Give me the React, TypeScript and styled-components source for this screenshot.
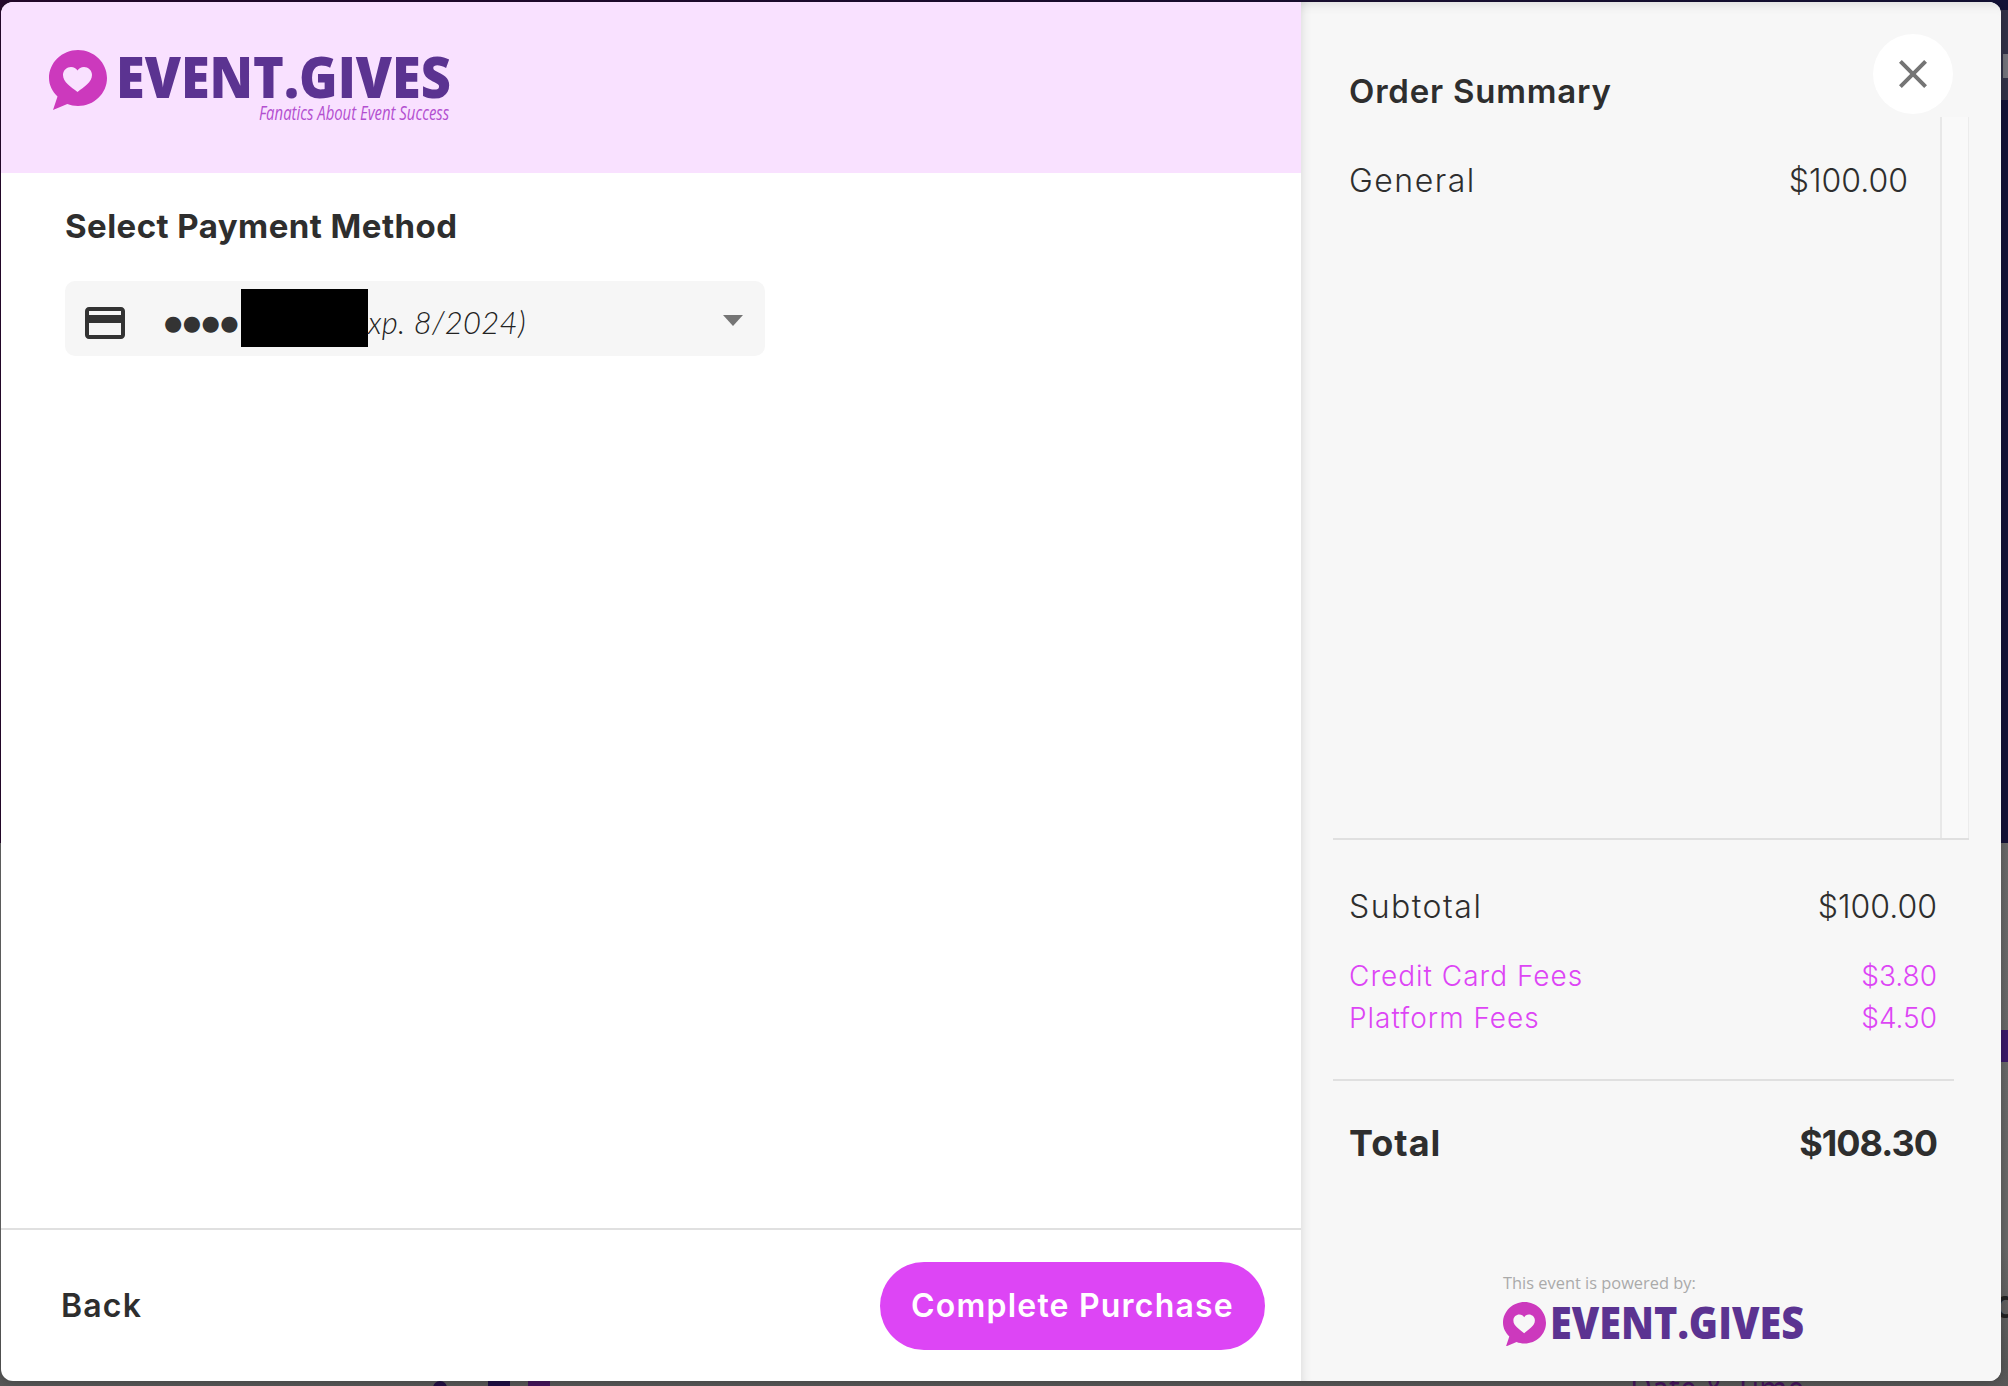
import styled, { createGlobalStyle } from 'styled-components';
import { MdClose, MdCreditCard } from 'react-icons/md';

const App = () => {
  return (
    <Page>
      <GlobalStyle />
      <Backdrop>
        <HeroBand />
        <BehindDot />
        <BehindBar $left={488} $color="#1f0f45" />
        <BehindBar $left={528} $color="#45155c" />
        <BehindHeading>Date &amp; Time</BehindHeading>
        <BehindTab />
        <BehindPurple />
        <BehindLetter>d</BehindLetter>
      </Backdrop>

      <Modal>
        <CheckoutPane>
          <BrandHeader>
            <BrandLogo>
              <LogoMark $width={58} $hole="#f9e1ff" />
              <BrandText>
                <Wordmark $size={57} $scale={0.916} $boxWidth={331}>EVENT.GIVES</Wordmark>
                <Tagline>Fanatics About Event Success</Tagline>
              </BrandText>
            </BrandLogo>
          </BrandHeader>

          <PaymentBody>
            <SectionTitle>Select Payment Method</SectionTitle>
            <PaymentSelect>
              <CardIcon size={48} color="#333333" />
              <CardDots>●●●●</CardDots>
              <Redaction />
              <CardExpiry>xp. 8/2024)</CardExpiry>
              <SelectCaret />
            </PaymentSelect>
          </PaymentBody>

          <ActionBar>
            <BackButton>Back</BackButton>
            <PurchaseButton>Complete Purchase</PurchaseButton>
          </ActionBar>
        </CheckoutPane>

        <SummaryPane>
          <CloseButton>
            <MdClose size={48} color="#757575" />
          </CloseButton>
          <SummaryTitle>Order Summary</SummaryTitle>

          <ItemsArea>
            <ItemsList>
              <ItemRow>
                <RowLabel>General</RowLabel>
                <span>$100.00</span>
              </ItemRow>
            </ItemsList>
            <ScrollTrack />
          </ItemsArea>

          <Totals>
            <SubtotalRow>
              <RowLabel>Subtotal</RowLabel>
              <span>$100.00</span>
            </SubtotalRow>
            {fees.map(fee => (
              <FeeRow key={fee.name}>
                <FeeLabel>{fee.name}</FeeLabel>
                <span>{fee.amount}</span>
              </FeeRow>
            ))}
          </Totals>

          <TotalBlock>
            <TotalRow>
              <TotalLabel>Total</TotalLabel>
              <TotalValue>$108.30</TotalValue>
            </TotalRow>
          </TotalBlock>

          <PoweredBy>
            <PoweredLabel>This event is powered by:</PoweredLabel>
            <PoweredLogo>
              <LogoMark $width={43} $hole="#f7f7f7" />
              <Wordmark $size={44.5} $scale={0.89} $boxWidth={251}>EVENT.GIVES</Wordmark>
            </PoweredLogo>
          </PoweredBy>
        </SummaryPane>
      </Modal>
    </Page>
  );
};

const fees = [
  { name: 'Credit Card Fees', amount: '$3.80' },
  { name: 'Platform Fees', amount: '$4.50' }
];

const LogoMark = ({ $width, $hole }: { $width: number; $hole: string }) => (
  <svg width={$width} height={($width * 60) / 58} viewBox="0 0 58 60">
    <path
      d="M29 0C45 0 58 12.600 58 28C58 43.500 45 56 29 56C25 56 21.500 55.300 18.300 54L4 60L8.500 46.500C3.300 41.500 0 35 0 28C0 12.600 13 0 29 0Z"
      fill="#cc39bd"
    />
    <path
      d="M28.500 42C22 37 14 32 14 25C14 20 18 17 22 17C25 17 27 18.500 28.500 20.500C30 18.500 32 17 35 17C39 17 43 20 43 25C43 32 35 37 28.500 42Z"
      fill={$hole}
    />
  </svg>
);

const GlobalStyle = createGlobalStyle`
  html, body {
    margin: 0;
    padding: 0;
    background: #666666;
  }
  body {
    font-family: Inter, "Open Sans", sans-serif;
    color: #2e2e2e;
  }
`;

const Page = styled.div`
  position: relative;
  width: 2008px;
  height: 1386px;
  overflow: hidden;
  background: #666666;
`;

const Backdrop = styled.div`
  position: absolute;
  inset: 0;
  background: linear-gradient(#6c6c6c, #6a6a6a 90%, #585858);
`;

const HeroBand = styled.div`
  height: 843px;
  background: linear-gradient(90deg, #28092f, #141238);
`;

const BehindDot = styled.div`
  position: absolute;
  left: 433px;
  top: 1381px;
  width: 14px;
  height: 14px;
  border-radius: 50%;
  background: #241044;
`;

const BehindBar = styled.div<{ $left: number; $color: string }>`
  position: absolute;
  left: ${({ $left }) => $left}px;
  top: 1378px;
  width: 22px;
  height: 8px;
  background: ${({ $color }) => $color};
`;

const BehindHeading = styled.div`
  position: absolute;
  left: 1630px;
  top: 1366px;
  font-family: 'Open Sans', sans-serif;
  font-size: 38px;
  line-height: 44px;
  color: #45155c;
  transform: scaleX(0.8);
  transform-origin: left;
  white-space: nowrap;
`;

const BehindTab = styled.div`
  position: absolute;
  right: 0;
  top: 10px;
  width: 8px;
  height: 90px;
  background: #33334a;

  &::after {
    content: '';
    display: block;
    margin: 44px 0 0 3px;
    height: 24px;
    background: #77777f;
  }
`;

const BehindPurple = styled.div`
  position: absolute;
  right: 0;
  top: 1030px;
  width: 8px;
  height: 32px;
  background: #3d1a6b;
`;

const BehindLetter = styled.div`
  position: absolute;
  left: 1994px;
  top: 1280px;
  font-size: 40px;
  line-height: 48px;
  font-weight: 500;
  color: #222222;
`;

const Modal = styled.div`
  position: absolute;
  left: 1px;
  top: 2px;
  width: 2000px;
  height: 1379px;
  display: flex;
  overflow: hidden;
  border-radius: 12px;
  background: #ffffff;
  box-shadow: 0 0 12px rgba(0, 0, 0, 0.3);
`;

const CheckoutPane = styled.div`
  width: 1300px;
  flex-shrink: 0;
  display: flex;
  flex-direction: column;
`;

const BrandHeader = styled.div`
  height: 171px;
  flex-shrink: 0;
  background: #f9e1ff;
  padding: 48px 0 0 48px;
  box-sizing: border-box;
`;

const BrandLogo = styled.div`
  display: flex;
  align-items: flex-start;
  gap: 9px;
`;

const BrandText = styled.div`
  display: flex;
  flex-direction: column;
  align-items: flex-end;
  width: 331px;
  padding-top: 1px;
`;

const Wordmark = styled.div<{ $size: number; $scale: number; $boxWidth: number }>`
  width: ${({ $boxWidth }) => $boxWidth}px;
  margin-top: 2px;
  font-family: 'Open Sans', sans-serif;
  font-weight: 800;
  font-size: ${({ $size }) => $size}px;
  line-height: ${({ $size }) => Math.round($size * 0.8)}px;
  color: #5b3391;
  white-space: nowrap;
  transform: scaleX(${({ $scale }) => $scale});
  transform-origin: left center;
`;

const Tagline = styled.div`
  width: 188px;
  margin-top: 2px;
  font-family: 'Open Sans', sans-serif;
  font-style: italic;
  font-weight: 400;
  font-size: 20px;
  line-height: 24px;
  color: #b34fd0;
  white-space: nowrap;
  transform: scaleX(0.745);
  transform-origin: left center;
`;

const PaymentBody = styled.div`
  flex: 1;
  padding: 32px 0 0 64px;
`;

const SectionTitle = styled.h2`
  margin: 0;
  font-size: 33px;
  line-height: 43px;
  font-weight: 700;
  letter-spacing: 0.45px;
  color: #2e2e2e;
`;

const PaymentSelect = styled.div`
  position: relative;
  width: 700px;
  height: 75px;
  margin-top: 33px;
  padding-left: 16px;
  box-sizing: border-box;
  display: flex;
  align-items: center;
  border-radius: 10px;
  background: #f6f6f6;
`;

const CardIcon = styled(MdCreditCard)`
  flex-shrink: 0;
  margin-top: 9px;
`;

const CardDots = styled.span`
  margin-left: 35px;
  width: 77px;
  padding-top: 9px;
  font-family: 'DejaVu Sans', sans-serif;
  font-size: 21px;
  letter-spacing: 0.4px;
  color: #333333;
  flex-shrink: 0;
  white-space: nowrap;
`;

const Redaction = styled.div`
  width: 127px;
  height: 58px;
  margin-top: -1px;
  flex-shrink: 0;
  background: #000000;
`;

const CardExpiry = styled.span`
  padding-top: 7px;
  font-family: Lato, sans-serif;
  font-style: italic;
  font-weight: 300;
  font-size: 31px;
  letter-spacing: 0.3px;
  color: #222222;
  white-space: nowrap;
`;

const SelectCaret = styled.div`
  position: absolute;
  right: 22px;
  top: 34px;
  width: 0;
  height: 0;
  border-left: 10.5px solid transparent;
  border-right: 10.5px solid transparent;
  border-top: 11px solid #757575;
`;

const ActionBar = styled.div`
  height: 153px;
  flex-shrink: 0;
  box-sizing: border-box;
  border-top: 2px solid #e0e0e0;
  padding: 0 36px 0 60px;
  display: flex;
  align-items: center;
  justify-content: space-between;
`;

const BackButton = styled.button`
  padding: 0;
  border: 0;
  background: none;
  font-family: inherit;
  font-size: 32px;
  font-weight: 600;
  letter-spacing: 1.2px;
  color: #2e2e2e;
`;

const PurchaseButton = styled.button`
  width: 385px;
  height: 88px;
  border: 0;
  border-radius: 44px;
  background: #dd45f5;
  font-family: inherit;
  font-size: 32px;
  font-weight: 600;
  letter-spacing: 1.2px;
  color: #ffffff;
  white-space: nowrap;
`;

const SummaryPane = styled.div`
  position: relative;
  flex: 1;
  display: flex;
  flex-direction: column;
  padding: 0 32px;
  background: #f7f7f7;
  box-shadow: inset 10px 0 10px -8px rgba(0, 0, 0, 0.1), inset 0 12px 12px -10px rgba(0, 0, 0, 0.12);
`;

const CloseButton = styled.button`
  position: absolute;
  top: 32px;
  right: 48px;
  width: 80px;
  height: 80px;
  padding: 0;
  border: 0;
  border-radius: 50%;
  background: #ffffff;
  display: flex;
  align-items: center;
  justify-content: center;
`;

const SummaryTitle = styled.h2`
  height: 115px;
  box-sizing: border-box;
  margin: 0;
  padding: 67px 0 0 16px;
  font-size: 33px;
  line-height: 44px;
  font-weight: 600;
  letter-spacing: 0.8px;
  color: #2e2e2e;
`;

const ItemsArea = styled.div`
  height: 723px;
  flex-shrink: 0;
  box-sizing: border-box;
  display: flex;
  border-bottom: 2px solid #e0e0e0;
`;

const ItemsList = styled.div`
  flex: 1;
  padding: 42px 32px 0 16px;
`;

const ItemRow = styled.div`
  display: flex;
  justify-content: space-between;
  font-size: 32px;
  line-height: 44px;
  font-weight: 300;
  color: #2e2e2e;
`;

const RowLabel = styled.span`
  letter-spacing: 1.5px;
`;

const ScrollTrack = styled.div`
  width: 29px;
  flex-shrink: 0;
  box-sizing: border-box;
  border-left: 2px solid #e8e8e8;
  border-right: 1px solid #ececec;
  background: #f9f9f9;
`;

const Totals = styled.div`
  height: 241px;
  box-sizing: border-box;
  margin-right: 15px;
  padding: 45px 17px 0 16px;
  border-bottom: 2px solid #e0e0e0;
`;

const SubtotalRow = styled(ItemRow)`
  margin-bottom: 26px;
`;

const FeeRow = styled.div`
  display: flex;
  justify-content: space-between;
  font-size: 28px;
  line-height: 42px;
  font-weight: 300;
  color: #dd45f5;
`;

const FeeLabel = styled.span`
  letter-spacing: 1px;
`;

const TotalBlock = styled.div`
  padding: 38px 32px 0 16px;
`;

const TotalRow = styled.div`
  display: flex;
  justify-content: space-between;
  font-size: 36px;
  line-height: 48px;
  font-weight: 700;
  color: #2e2e2e;
`;

const TotalLabel = styled.span`
  letter-spacing: 1px;
`;

const TotalValue = styled.span`
  letter-spacing: -1px;
`;

const PoweredBy = styled.div`
  margin-top: 104px;
  margin-left: 170px;
`;

const PoweredLabel = styled.div`
  font-family: 'Open Sans', sans-serif;
  font-size: 16.4px;
  line-height: 24px;
  color: #aaaaaa;
`;

const PoweredLogo = styled.div`
  margin-top: 7px;
  display: flex;
  align-items: flex-start;
  gap: 4px;
`;

export default App;
